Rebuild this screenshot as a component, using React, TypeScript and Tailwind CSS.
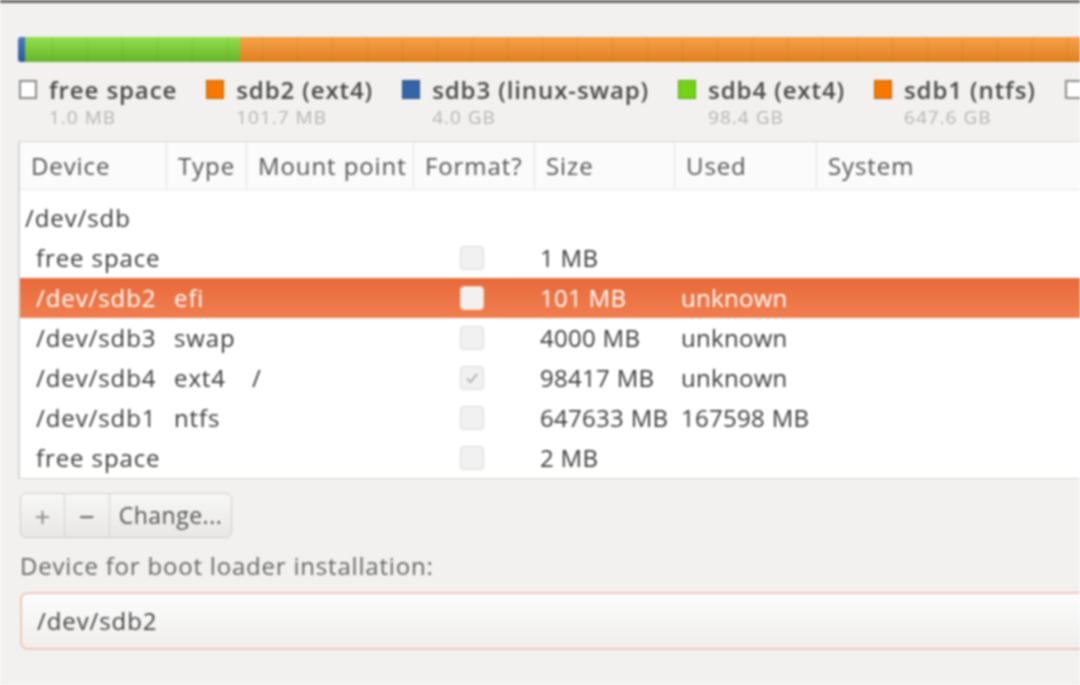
import React from "react";

type Part = { name: string; size: string; color: string; bordered?: boolean };

const legend: Part[] = [
  { name: "free space", size: "1.0 MB", color: "bg-white", bordered: true },
  { name: "sdb2 (ext4)", size: "101.7 MB", color: "bg-[#f57900]" },
  { name: "sdb3 (linux-swap)", size: "4.0 GB", color: "bg-[#3465a4]" },
  { name: "sdb4 (ext4)", size: "98.4 GB", color: "bg-[#73d216]" },
  { name: "sdb1 (ntfs)", size: "647.6 GB", color: "bg-[#f57900]" },
  { name: "free space", size: "2.0 MB", color: "bg-white", bordered: true },
];

type Row = {
  device: string;
  type?: string;
  mount?: string;
  format?: boolean | "checked";
  size?: string;
  used?: string;
  child?: boolean;
  selected?: boolean;
};

const rows: Row[] = [
  { device: "/dev/sdb" },
  { device: "free space", format: true, size: "1 MB", child: true },
  { device: "/dev/sdb2", type: "efi", format: true, size: "101 MB", used: "unknown", child: true, selected: true },
  { device: "/dev/sdb3", type: "swap", format: true, size: "4000 MB", used: "unknown", child: true },
  { device: "/dev/sdb4", type: "ext4", mount: "/", format: "checked", size: "98417 MB", used: "unknown", child: true },
  { device: "/dev/sdb1", type: "ntfs", format: true, size: "647633 MB", used: "167598 MB", child: true },
  { device: "free space", format: true, size: "2 MB", child: true },
];

const cols = [
  { label: "Device", w: "w-[147px]" },
  { label: "Type", w: "w-[80px]" },
  { label: "Mount point", w: "w-[167px]" },
  { label: "Format?", w: "w-[121px]" },
  { label: "Size", w: "w-[140px]" },
  { label: "Used", w: "w-[142px]" },
  { label: "System", w: "flex-1" },
];

function Check({ checked, selected }: { checked?: boolean; selected?: boolean }) {
  return (
    <div
      className={`h-[24px] w-[24px] rounded-[4px] border flex items-center justify-center ${
        selected ? "border-[#f6d3c2] bg-[#f3f1f0]" : "border-[#dcdcdc] bg-[#f1f1f1]"
      }`}
    >
      {checked && (
        <svg width="16" height="16" viewBox="0 0 16 16">
          <path d="M3 8.5 L6.5 12 L13 4" fill="none" stroke="#a8a8a8" strokeWidth="1.6" />
        </svg>
      )}
    </div>
  );
}

export default function App() {
  return (
    <div className="h-[685px] w-[1080px] overflow-hidden bg-[#f2f1f0] font-['Open_Sans',sans-serif] text-[#3c3c3c] blur-[0.8px]">
      <div className="h-[3px] bg-[#6a6a6a]" />

      <div className="pl-[18px] pt-[34px]">
        {/* partition bar */}
        <div className="relative flex h-[25px] w-[1090px] overflow-hidden rounded-l-[3px]">
          <div className="w-[7px] bg-gradient-to-b from-[#4a7bc0] to-[#2c5a98]" />
          <div className="w-[215px] bg-gradient-to-b from-[#92e04c] to-[#66b42a]" />
          <div className="flex-1 bg-gradient-to-b from-[#f7a146] to-[#e0801f]" />
          <div className="absolute inset-0 bg-[repeating-linear-gradient(90deg,transparent_0_34px,rgba(0,0,0,0.07)_34px_35px)]" />
        </div>

        {/* legend */}
        <div className="mt-[13px] ml-[1px] flex gap-[29px] whitespace-nowrap">
          {legend.map((p, i) => (
            <div key={i} className="flex shrink-0 items-start gap-[12px]">
              <div
                className={`mt-[5px] h-[19px] min-w-[18px] w-[18px] shrink-0 ${p.color} ${
                  p.bordered ? "border-2 border-[#8a8a8a]" : "border border-[#00000033]"
                }`}
              />
              <div className="flex flex-col">
                <span className="text-[24px] leading-[30px] font-semibold tracking-[0.9px] text-[#4a4a4a]">{p.name}</span>
                <span className="text-[19px] leading-[24px] tracking-[1px] text-[#b4b4b4]">{p.size}</span>
              </div>
            </div>
          ))}
        </div>

        {/* partitions table */}
        <div className="mt-[12px] w-[1080px] border-l-2 border-t border-b border-[#d8d6d4] bg-white">
          <div className="flex h-[48px] border-b border-[#e8e6e4] bg-[#fbfbfb] text-[24px] text-[#555] tracking-[0.9px]">
            {cols.map((c) => (
              <div
                key={c.label}
                className={`${c.w} flex items-center border-r border-[#e6e4e2] pl-[11px] whitespace-nowrap`}
              >
                {c.label}
              </div>
            ))}
          </div>
          <div className="pt-[8px] text-[24px] tracking-[0.9px]">
            {rows.map((r, i) => (
              <div
                key={i}
                className={`flex h-[40px] items-center whitespace-nowrap ${
                  r.selected ? "bg-gradient-to-b from-[#e8693a] to-[#f07f4f] text-white" : ""
                }`}
              >
                <div className={`w-[147px] ${r.child ? "pl-[16px]" : "pl-[5px]"}`}>{r.device}</div>
                <div className="w-[80px] pl-[7px]">{r.type}</div>
                <div className="w-[167px] pl-[5px]">{r.mount}</div>
                <div className="flex w-[121px] justify-center pr-[6px]">
                  {r.format && <Check checked={r.format === "checked"} selected={r.selected} />}
                </div>
                <div className="w-[140px] pl-[5px] tracking-[0.3px]">{r.size}</div>
                <div className="w-[142px] pl-[6px] tracking-[0.3px]">{r.used}</div>
                <div className="flex-1" />
              </div>
            ))}
          </div>
        </div>

        {/* add / remove / change */}
        <div className="mt-[14px] ml-[2px] flex h-[45px] w-[212px] overflow-hidden rounded-[6px] border border-[#cfcdcb] bg-gradient-to-b from-[#f7f7f6] to-[#e9e8e7] text-[23px] text-[#555]">
          <div className="flex w-[44px] items-center justify-center border-r border-[#d4d2d0] text-[28px] text-[#8a8a8a]">+</div>
          <div className="flex w-[45px] items-center justify-center border-r border-[#d4d2d0] text-[28px] text-[#5a5a5a]">−</div>
          <div className="flex flex-1 items-center justify-center tracking-[0.5px]">Change...</div>
        </div>

        {/* boot loader */}
        <div className="mt-[10px] ml-[2px] text-[24px] text-[#666] tracking-[0.8px]">Device for boot loader installation:</div>
        <div className="mt-[8px] ml-[2px] flex h-[58px] w-[1080px] items-center rounded-[8px] border-2 border-[#ebcabd] bg-gradient-to-b from-[#fdfdfd] to-[#efeeed] pl-[15px] text-[24px] text-[#444] tracking-[0.9px]">
          /dev/sdb2
        </div>
      </div>
    </div>
  );
}
